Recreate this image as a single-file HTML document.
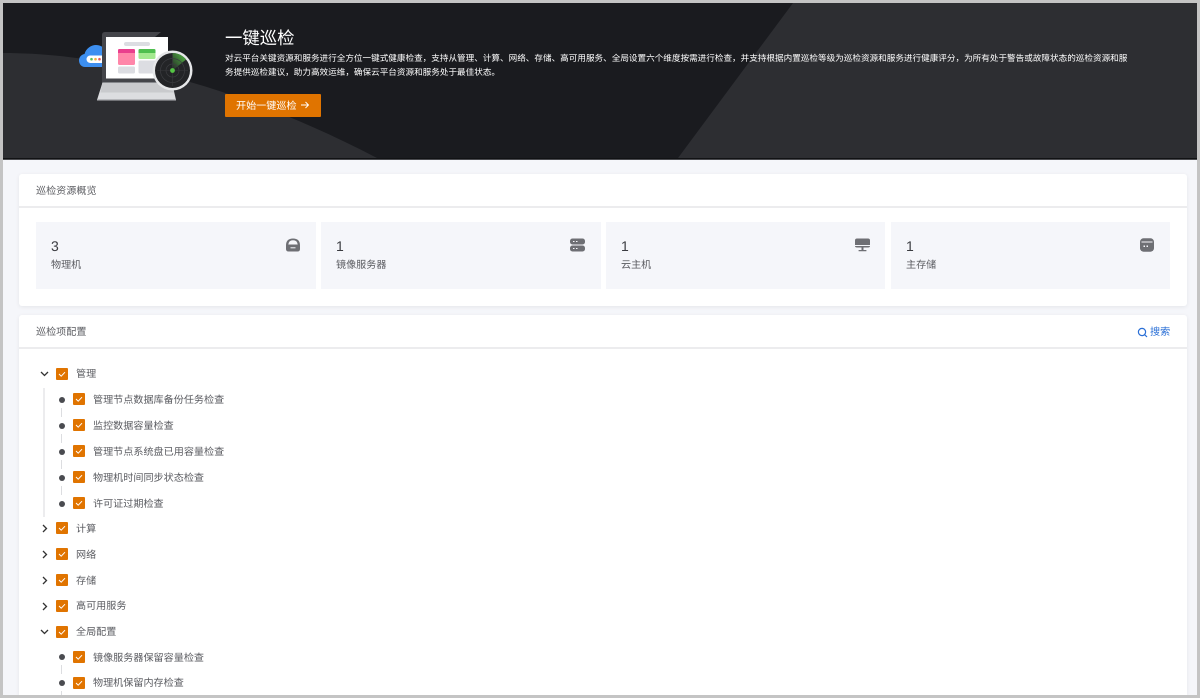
<!DOCTYPE html>
<html lang="zh">
<head>
<meta charset="utf-8">
<title>一键巡检</title>
<style>
html,body{margin:0;padding:0;width:1200px;height:698px;overflow:hidden;background:#c4c4c4}
body{position:relative;font-family:"Liberation Sans","Noto Sans CJK SC",sans-serif;color:#555;text-rendering:geometricPrecision}
*{box-sizing:border-box}
.a{position:absolute}
.page{left:3px;top:3px;width:1194px;height:692px;background:#f5f6fa;overflow:hidden}
.t{position:absolute;white-space:nowrap;line-height:14px;font-size:10.1px;color:#5a5b60;margin-top:1px}
.card{position:absolute;left:19px;width:1168px;background:#fff;border-radius:3px;box-shadow:0 1px 4px rgba(0,0,0,.07)}
.tile{position:absolute;top:222px;height:67px;background:#f5f6fa}
.num{position:absolute;white-space:nowrap;font-size:14px;line-height:16px;color:#3a3b40}
.cb{position:absolute;width:12px;height:12px;background:#e07400;border-radius:1px}
.cb svg{display:block;position:absolute;left:0;top:0}
.dot{position:absolute;left:59px;width:6px;height:6px;border-radius:50%;background:#4a4b50}
.ln{position:absolute;left:61px;width:1px;height:9px;background:#dcdde0}
.arr{position:absolute;left:40px;width:9px;height:9px}
</style>
</head>
<body>
<div class="a page"></div>

<svg class="a" style="left:3px;top:3px" width="1194" height="157" viewBox="0 0 1194 157">
<rect width="1194" height="157" fill="#1a1b1f"/>
<path d="M0 50C100 50 230 80 374 155H0Z" fill="#2d2e32"/>
<path d="M790 0H1194V155H675Z" fill="#2d2e32"/>
<rect y="155" width="1194" height="1" fill="#111214"/>
<rect y="156" width="1194" height="1" fill="#4a4b4f"/>
</svg>

<svg class="a" style="left:75px;top:28px" width="125" height="80" viewBox="75 28 125 80">
<defs><linearGradient id="rg" x1="0" y1="1" x2="1" y2="0"><stop offset="0" stop-color="#232427"/><stop offset="1" stop-color="#55c045"/></linearGradient></defs>
<path d="M85 67C81 67 79 63.500 79 60.500C79 57 81.500 54.500 84.500 54C86 48.500 91 45 96 45C100 45 104 47 106 51V67Z" fill="#3d8ff0"/>
<rect x="86.500" y="55.500" width="20" height="7.500" rx="3.700" fill="#fff"/>
<circle cx="91.500" cy="59.200" r="1.300" fill="#58c15a"/>
<circle cx="95.500" cy="59.200" r="1.300" fill="#f5b042"/>
<circle cx="99.500" cy="59.200" r="1.300" fill="#ee5a5a"/>
<path d="M102 35Q102 32 105 32H161L155 37H168V84H102Z" fill="#44454a"/>
<rect x="106" y="37" width="62" height="41.500" fill="#fff"/>
<rect x="124" y="42" width="26" height="4" rx="2" fill="#dcdde2"/>
<rect x="118" y="49" width="17" height="16" rx="1.500" fill="#ff86a9"/>
<path d="M118 53V50.500Q118 49 119.500 49H133.500Q135 49 135 50.500V53Z" fill="#e93f8d"/>
<rect x="138.500" y="49" width="17" height="10" rx="1.500" fill="#a3e98f"/>
<path d="M138.500 53V50.500Q138.500 49 140 49H154Q155.500 49 155.500 50.500V53Z" fill="#4fbf4f"/>
<rect x="118" y="66.500" width="17" height="7" rx="1.500" fill="#dcdde2"/>
<rect x="138.500" y="60.500" width="20" height="13" rx="1.500" fill="#dcdde2"/>
<path d="M102.500 82.500H172L176 100H97Z" fill="#dcdde0"/>
<path d="M102.500 82.500H172L174 92.500H100.500Z" fill="#c9cacd"/>
<rect x="97" y="99" width="79" height="1.500" fill="#b5b6ba"/>
<circle cx="172.500" cy="70.500" r="20" fill="#e6e7e9"/>
<circle cx="172.500" cy="70.500" r="17.500" fill="#232427"/>
<path d="M172.500 70.500L172.500 53A17.500 17.500 0 0 1 186 59.500Z" fill="url(#rg)"/>
<circle cx="172.500" cy="70.500" r="12" fill="none" stroke="#3c3d41" stroke-width=".7"/>
<circle cx="172.500" cy="70.500" r="6.500" fill="none" stroke="#3c3d41" stroke-width=".7"/>
<path d="M157 70.500H188M172.500 55V86" stroke="#38393d" stroke-width=".6"/>
<circle cx="172.500" cy="70.500" r="2.400" fill="#55c545"/>
</svg>

<div class="t" style="left:225px;top:27px;margin-top:0;font-size:17.36px;line-height:22px;color:#fff">一键巡检</div>
<div class="t" style="left:225px;top:51px;margin-top:0;font-size:8.6px;color:#fff;line-height:14px">对云平台关键资源和服务进行全方位一键式健康检查，支持从管理、计算、网络、存储、高可用服务、全局设置六个维度按需进行检查，并支持根据内置巡检等级为巡检资源和服务进行健康评分，为所有处于警告或故障状态的巡检资源和服</div>
<div class="t" style="left:225px;top:65px;margin-top:0;font-size:8.6px;color:#fff;line-height:14px">务提供巡检建议，助力高效运维，确保云平台资源和服务处于最佳状态。</div>

<div class="a" style="left:225px;top:94px;width:96px;height:23px;background:#e07400;border-radius:1px"></div>
<div class="t" style="left:236px;top:99px;color:#fff">开始一键巡检</div>
<svg class="a" style="left:300px;top:100px" width="10" height="10" viewBox="0 0 10 10"><path d="M1 5H8.500M5.500 2L8.500 5L5.500 8" fill="none" stroke="#fff" stroke-width=".9"/></svg>

<div class="card" style="top:174px;height:132px"></div>
<div class="a" style="left:19px;top:206px;width:1168px;height:2px;background:#ececee"></div>
<div class="t" style="left:36px;top:184px">巡检资源概览</div>

<div class="tile" style="left:36px;width:280px"></div>
<div class="tile" style="left:321px;width:280px"></div>
<div class="tile" style="left:606px;width:279px"></div>
<div class="tile" style="left:891px;width:279px"></div>

<div class="num" style="left:51px;top:238px">3</div>
<div class="num" style="left:336px;top:238px">1</div>
<div class="num" style="left:621px;top:238px">1</div>
<div class="num" style="left:906px;top:238px">1</div>
<div class="t" style="left:51px;top:258px">物理机</div>
<div class="t" style="left:336px;top:258px">镜像服务器</div>
<div class="t" style="left:621px;top:258px">云主机</div>
<div class="t" style="left:906px;top:258px">主存储</div>

<svg class="a" style="left:285.500px;top:238px" width="14" height="14" viewBox="0 0 14 14">
<path d="M0 7.500Q0 .5 7 .5Q14 .5 14 7.500V11Q14 13.500 11.500 13.500H2.500Q0 13.500 0 11Z" fill="#6e6f74"/>
<path d="M2.300 6.500Q2.800 2.300 7 2.300Q11.200 2.300 11.700 6.500Z" fill="#f5f6fa"/>
<rect x="4.500" y="9.300" width="5" height="1" fill="#f5f6fa"/>
</svg>
<svg class="a" style="left:570px;top:238px" width="15" height="14" viewBox="0 0 15 14">
<rect x="0" y="0.500" width="15" height="6" rx="2.500" fill="#6e6f74"/>
<rect x="0" y="7.500" width="15" height="6" rx="2.500" fill="#6e6f74"/>
<path d="M3 3.500H4.500M6 3.500H7.500M3 10.500H4.500M6 10.500H7.500" stroke="#f5f6fa" stroke-width="1"/>
</svg>
<svg class="a" style="left:855px;top:238px" width="15" height="14" viewBox="0 0 15 14">
<path d="M2 .5H13Q15 .5 15 2.500V7H0V2.500Q0 .5 2 .5Z" fill="#6e6f74"/>
<path d="M0 8H15Q15 9.500 13 9.500H2Q0 9.500 0 8Z" fill="#6e6f74"/>
<rect x="6.500" y="9.500" width="2" height="2.500" fill="#6e6f74"/>
<rect x="3.500" y="12" width="8" height="1.300" rx=".6" fill="#6e6f74"/>
</svg>
<svg class="a" style="left:1140px;top:238px" width="14" height="14" viewBox="0 0 14 14">
<rect x="0" y="0.300" width="14" height="13.400" rx="3.500" fill="#6e6f74"/>
<rect x="1.500" y="3.500" width="11" height="1" fill="#f5f6fa"/>
<rect x="3.500" y="7.500" width="1.500" height="1.500" fill="#f5f6fa"/>
<rect x="6.500" y="7.500" width="1.500" height="1.500" fill="#f5f6fa"/>
</svg>

<div class="card" style="top:315px;height:380px;border-radius:3px 3px 0 0"></div>
<div class="a" style="left:19px;top:347px;width:1168px;height:1.500px;background:#ececee"></div>
<div class="t" style="left:36px;top:325px">巡检项配置</div>
<svg class="a" style="left:1136.500px;top:326.500px" width="11" height="11" viewBox="0 0 11 11"><circle cx="5" cy="5" r="3.600" fill="none" stroke="#2a6fd6" stroke-width="1.200"/><path d="M7.700 7.700L10 10" stroke="#2a6fd6" stroke-width="1.200"/></svg>
<div class="t" style="left:1150px;top:325px;color:#2a6fd6">搜索</div>

<div class="a" style="left:43px;top:388px;width:2px;height:129px;background:#ececee"></div>

<svg class="arr" style="top:369px" viewBox="0 0 9 9"><path d="M1 3L4.500 6.500L8 3" fill="none" stroke="#333" stroke-width="1.300"/></svg>
<svg class="arr" style="top:524px" viewBox="0 0 9 9"><path d="M3 1L6.500 4.500L3 8" fill="none" stroke="#333" stroke-width="1.300"/></svg>
<svg class="arr" style="top:550px" viewBox="0 0 9 9"><path d="M3 1L6.500 4.500L3 8" fill="none" stroke="#333" stroke-width="1.300"/></svg>
<svg class="arr" style="top:576px" viewBox="0 0 9 9"><path d="M3 1L6.500 4.500L3 8" fill="none" stroke="#333" stroke-width="1.300"/></svg>
<svg class="arr" style="top:602px" viewBox="0 0 9 9"><path d="M3 1L6.500 4.500L3 8" fill="none" stroke="#333" stroke-width="1.300"/></svg>
<svg class="arr" style="top:627px" viewBox="0 0 9 9"><path d="M1 3L4.500 6.500L8 3" fill="none" stroke="#333" stroke-width="1.300"/></svg>

<div class="cb" style="left:56px;top:367.500px"><svg width="12" height="12" viewBox="0 0 12 12"><path d="M3 6L5.200 8.200L9 4.200" fill="none" stroke="#fff" stroke-width="1"/></svg></div>
<div class="t" style="left:76px;top:367px">管理</div>

<div class="dot" style="top:397px"></div>
<div class="cb" style="left:73px;top:393px"><svg width="12" height="12" viewBox="0 0 12 12"><path d="M3 6L5.200 8.200L9 4.200" fill="none" stroke="#fff" stroke-width="1"/></svg></div>
<div class="t" style="left:93px;top:393px">管理节点数据库备份任务检查</div>
<div class="ln" style="top:408px"></div>

<div class="dot" style="top:423px"></div>
<div class="cb" style="left:73px;top:419px"><svg width="12" height="12" viewBox="0 0 12 12"><path d="M3 6L5.200 8.200L9 4.200" fill="none" stroke="#fff" stroke-width="1"/></svg></div>
<div class="t" style="left:93px;top:419px">监控数据容量检查</div>
<div class="ln" style="top:434px"></div>

<div class="dot" style="top:449px"></div>
<div class="cb" style="left:73px;top:445px"><svg width="12" height="12" viewBox="0 0 12 12"><path d="M3 6L5.200 8.200L9 4.200" fill="none" stroke="#fff" stroke-width="1"/></svg></div>
<div class="t" style="left:93px;top:445px">管理节点系统盘已用容量检查</div>
<div class="ln" style="top:460px"></div>

<div class="dot" style="top:475px"></div>
<div class="cb" style="left:73px;top:471px"><svg width="12" height="12" viewBox="0 0 12 12"><path d="M3 6L5.200 8.200L9 4.200" fill="none" stroke="#fff" stroke-width="1"/></svg></div>
<div class="t" style="left:93px;top:471px">物理机时间同步状态检查</div>
<div class="ln" style="top:486px"></div>

<div class="dot" style="top:500.500px"></div>
<div class="cb" style="left:73px;top:497px"><svg width="12" height="12" viewBox="0 0 12 12"><path d="M3 6L5.200 8.200L9 4.200" fill="none" stroke="#fff" stroke-width="1"/></svg></div>
<div class="t" style="left:93px;top:497px">许可证过期检查</div>

<div class="cb" style="left:56px;top:522px"><svg width="12" height="12" viewBox="0 0 12 12"><path d="M3 6L5.200 8.200L9 4.200" fill="none" stroke="#fff" stroke-width="1"/></svg></div>
<div class="t" style="left:76px;top:522px">计算</div>

<div class="cb" style="left:56px;top:548px"><svg width="12" height="12" viewBox="0 0 12 12"><path d="M3 6L5.200 8.200L9 4.200" fill="none" stroke="#fff" stroke-width="1"/></svg></div>
<div class="t" style="left:76px;top:548px">网络</div>

<div class="cb" style="left:56px;top:574px"><svg width="12" height="12" viewBox="0 0 12 12"><path d="M3 6L5.200 8.200L9 4.200" fill="none" stroke="#fff" stroke-width="1"/></svg></div>
<div class="t" style="left:76px;top:574px">存储</div>

<div class="cb" style="left:56px;top:600px"><svg width="12" height="12" viewBox="0 0 12 12"><path d="M3 6L5.200 8.200L9 4.200" fill="none" stroke="#fff" stroke-width="1"/></svg></div>
<div class="t" style="left:76px;top:599px">高可用服务</div>

<div class="cb" style="left:56px;top:625.500px"><svg width="12" height="12" viewBox="0 0 12 12"><path d="M3 6L5.200 8.200L9 4.200" fill="none" stroke="#fff" stroke-width="1"/></svg></div>
<div class="t" style="left:76px;top:625px">全局配置</div>

<div class="dot" style="top:654px"></div>
<div class="cb" style="left:73px;top:651px"><svg width="12" height="12" viewBox="0 0 12 12"><path d="M3 6L5.200 8.200L9 4.200" fill="none" stroke="#fff" stroke-width="1"/></svg></div>
<div class="t" style="left:93px;top:651px">镜像服务器保留容量检查</div>
<div class="ln" style="top:665px"></div>

<div class="dot" style="top:680px"></div>
<div class="cb" style="left:73px;top:676.500px"><svg width="12" height="12" viewBox="0 0 12 12"><path d="M3 6L5.200 8.200L9 4.200" fill="none" stroke="#fff" stroke-width="1"/></svg></div>
<div class="t" style="left:93px;top:676px">物理机保留内存检查</div>
<div class="ln" style="top:691px;height:4px"></div>

<div class="a" style="left:0;top:695px;width:1200px;height:3px;background:#c4c4c4"></div>
</body>
</html>
